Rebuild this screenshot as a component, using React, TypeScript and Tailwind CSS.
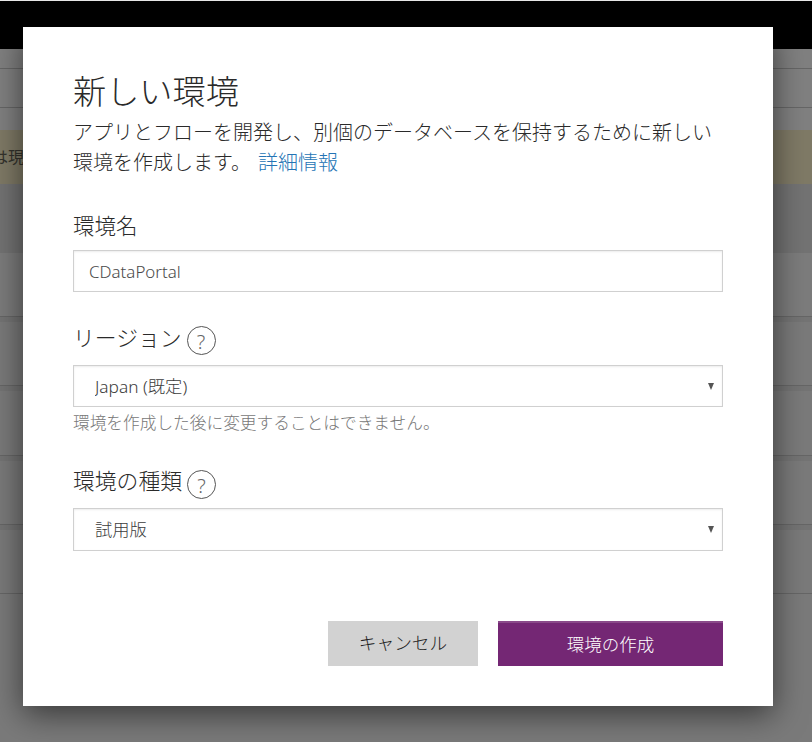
import React from "react";

const font = "font-['Noto_Sans','Noto_Sans_CJK_JP',sans-serif]";

function Help() {
  return (
    <span className="ml-[5px] inline-flex h-[29px] w-[29px] shrink-0 items-center justify-center rounded-full border border-[#555] pt-[2px] text-[20px] font-light leading-none text-[#666]">
      ?
    </span>
  );
}

function Select({ value, tall }: { value: string; tall?: boolean }) {
  return (
    <div className="relative">
      <select
        defaultValue={value}
        className={`block w-full appearance-none border border-[#d0d0d0] bg-white pl-[21px] pt-[1px] text-[17.3px] font-light text-[#3c3c3c] shadow-[inset_0_1px_2px_rgba(0,0,0,0.08)] ${tall ? "h-[43px]" : "h-[42px]"}`}
      >
        <option>{value}</option>
      </select>
      <span className="pointer-events-none absolute right-[9px] top-[18px] h-0 w-0 border-x-[3.5px] border-t-[7px] border-x-transparent border-t-[#555]" />
    </div>
  );
}

function Row({ height }: { height: string }) {
  return (
    <div className={height}>
      <div className="h-[1px] bg-[#666]" />
      <div className="h-[5px] bg-[#747474]" />
    </div>
  );
}

export default function App() {
  return (
    <div className={`relative h-[742px] w-[812px] overflow-hidden bg-[#7a7a7a] ${font}`}>
      <div className="h-[1px] bg-[#e8e8e8]" />
      <div className="h-[48px] bg-black" />
      <div className="h-[19px] bg-[#808080]" />
      <div className="h-[39px] border-t border-[#666] bg-[#808080]" />
      <div className="h-[23px] border-t border-[#666] bg-[#808080]" />
      <div className="flex h-[54px] items-center justify-start bg-[#7f7a66]">
        <div className="flex w-[24px] justify-end overflow-hidden whitespace-nowrap text-[16px] text-[#33322c]">
          は現
        </div>
      </div>
      <div className="h-[69px] bg-[#737373]" />
      <div className="h-[63px] bg-[#7c7c7c]" />
      <Row height="h-[69px]" />
      <Row height="h-[70px]" />
      <Row height="h-[69px]" />
      <Row height="h-[69px]" />
      <div className="h-[1px] bg-[#666]" />

      <div className="absolute left-[23px] top-[27px] flex h-[679px] w-[750px] flex-col bg-white px-[50px] pt-[41px] text-[#2a2a2a] shadow-[0_8px_30px_rgba(0,0,0,0.55)]">
        <h1 className="text-[33.2px] font-light leading-[48px]">新しい環境</h1>
        <p className="mt-[2px] text-[20px] font-light leading-[30px]">
          アプリとフローを開発し、別個のデータベースを保持するために新しい
          <br />
          環境を作成します。
          <a className="ml-[7px] text-[#2474b5]" href="#">
            詳細情報
          </a>
        </p>

        <label className="mt-[33px] block text-[21.5px] font-light leading-[30px]">環境名</label>
        <input
          defaultValue="CDataPortal"
          className="mt-[9px] block h-[42px] w-full border border-[#d0d0d0] bg-white pl-[15px] text-[16.9px] font-light text-[#4a4a4a] shadow-[inset_0_1px_2px_rgba(0,0,0,0.08)]"
        />

        <div className="mt-[34px] flex h-[29px] items-start text-[21.8px] font-light leading-[24px]">
          リージョン
          <Help />
        </div>
        <div className="mt-[10px]">
          <Select value="Japan (既定)" />
        </div>
        <p className="mt-[4px] text-[16.7px] font-light leading-[24px] text-[#777]">
          環境を作成した後に変更することはできません。
        </p>

        <div className="mt-[35px] flex h-[29px] items-start text-[21.8px] font-light leading-[22px]">
          環境の種類
          <Help />
        </div>
        <div className="mt-[9px]">
          <Select value="試用版" tall />
        </div>

        <div className="mt-[70px] flex justify-end gap-[20px]">
          <button className="h-[45px] w-[150px] bg-[#d2d2d2] text-[17.7px] font-light text-[#222]">
            キャンセル
          </button>
          <button className="h-[45px] w-[225px] border-t-2 border-[#8a4a8a] bg-[#742774] text-[17.5px] font-light text-white">
            環境の作成
          </button>
        </div>
      </div>
    </div>
  );
}
